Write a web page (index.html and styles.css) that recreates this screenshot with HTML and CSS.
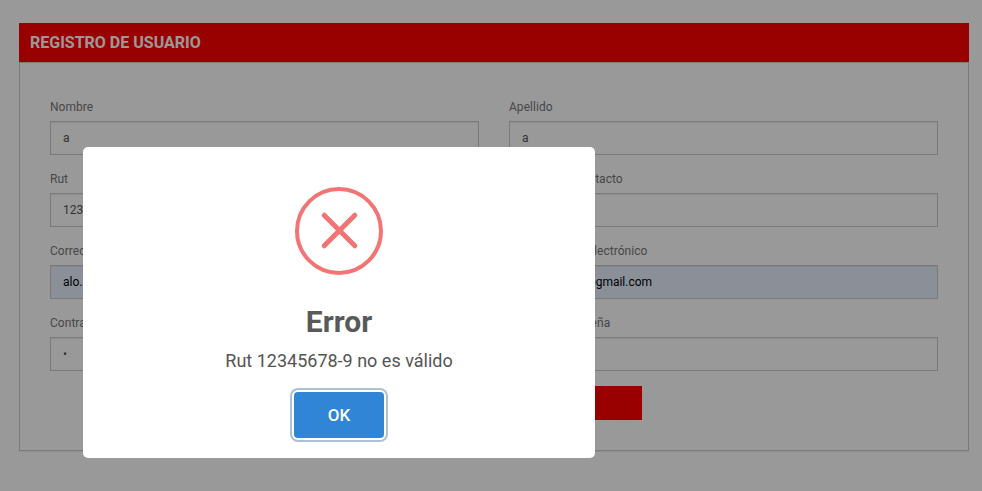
FILE: index.html
```html
<!DOCTYPE html>
<html lang="es">
<head>
<meta charset="utf-8">
<title>Registro de usuario</title>
<link rel="stylesheet" href="styles.css">
</head>
<body>
<main class="panel">
  <h1 class="panel-heading">REGISTRO DE USUARIO</h1>
  <form class="panel-body">
    <div class="fields">
      <label class="field"><span>Nombre</span><input type="text" value="a"></label>
      <label class="field"><span>Apellido</span><input type="text" value="a"></label>
      <label class="field"><span>Rut</span><input type="text" value="12345678-9"></label>
      <label class="field"><span>Teléfono de contacto</span><input type="text"></label>
      <label class="field"><span>Correo electrónico</span><input class="autofilled" type="text" value="alo.alo@gmail.com"></label>
      <label class="field"><span>Repetir correo electrónico</span><input class="autofilled email-repeat" type="text" value="alo.alo.alo.a@gmail.com"></label>
      <label class="field"><span>Contraseña</span><input type="password" value="a"></label>
      <label class="field"><span>Repetir contraseña</span><input type="password"></label>
    </div>
    <button class="submit" type="button">Registrar</button>
  </form>
</main>
<div class="overlay">
  <section class="modal" role="dialog" aria-labelledby="modal-title">
    <svg class="modal-icon" viewBox="0 0 88 88" aria-hidden="true">
      <circle cx="44" cy="44" r="42"/>
      <path class="cross" d="M29.2 28.2 59.8 58.8M59.8 28.2 29.2 58.8"/>
    </svg>
    <h2 class="modal-title" id="modal-title">Error</h2>
    <p class="modal-text">Rut 12345678-9 no es válido</p>
    <button class="modal-ok" type="button">OK</button>
  </section>
</div>
</body>
</html>
```
FILE: styles.css
```css
* { box-sizing: border-box; }
body {
  margin: 0;
  padding: 23px 13px 0 19px;
  height: 491px;
  overflow: hidden;
  background: #fff;
  color: #777;
  font: 12px/17px Roboto, sans-serif;
}
input, button { font: inherit; }
.panel-heading {
  margin: 0;
  height: 39px;
  padding-left: 11px;
  background: #f00;
  color: #fff;
  font-size: 16px;
  font-weight: 700;
  line-height: 39px;
}
.panel-body {
  height: 389px;
  padding: 35px 30px 0;
  border: 1px solid #ccc;
  box-shadow: 0 1px 1px rgba(0, 0, 0, .05);
}
.fields {
  display: grid;
  grid-template-columns: 1fr 1fr;
  gap: 15px 30px;
}
.field { display: block; height: 57px; }
.field span {
  display: block;
  width: max-content;
  padding: 1px 0 5px;
  letter-spacing: .04px;
}
.field input {
  display: block;
  width: 100%;
  height: 34px;
  padding: 6px 12px;
  border: 1px solid #ccc;
  border-radius: 0;
  background: #fff;
  color: #555;
  box-shadow: inset 0 1px 1px rgba(0, 0, 0, .075);
}
.field .autofilled { background: #e8f0fe; color: #000; }
.field .email-repeat { padding-left: 10px; }
.submit {
  display: block;
  width: 296px;
  height: 34px;
  margin: 15px auto 0;
  border: 0;
  background: #f00;
  color: #fff;
}
.overlay {
  position: fixed;
  inset: 0;
  padding: 147px 0 0 83px;
  background: rgba(0, 0, 0, .4);
}
.modal {
  display: flex;
  flex-direction: column;
  align-items: center;
  width: 512px;
  height: 311px;
  padding-top: 40px;
  border-radius: 5px;
  background: #fff;
}
.modal-icon {
  flex: none;
  width: 88px;
  height: 88px;
  fill: none;
  stroke: #f27474;
  stroke-width: 4;
}
.modal-icon .cross { stroke-width: 5; stroke-linecap: round; }
.modal-title {
  margin: 29px 0 0;
  color: #595959;
  font-size: 30px;
  font-weight: 700;
  line-height: 36px;
}
.modal-text {
  margin: 8px 0 0;
  color: #545454;
  font-size: 18px;
  line-height: 26px;
}
.modal-ok {
  width: 90px;
  height: 46px;
  margin-top: 18px;
  padding: 0;
  border: 0;
  border-radius: 4px;
  background: #3085d6;
  color: #fff;
  font-size: 17px;
  font-weight: 500;
  box-shadow: 0 0 0 2px #fff, 0 0 0 4px rgba(50, 100, 150, .4);
}
```
